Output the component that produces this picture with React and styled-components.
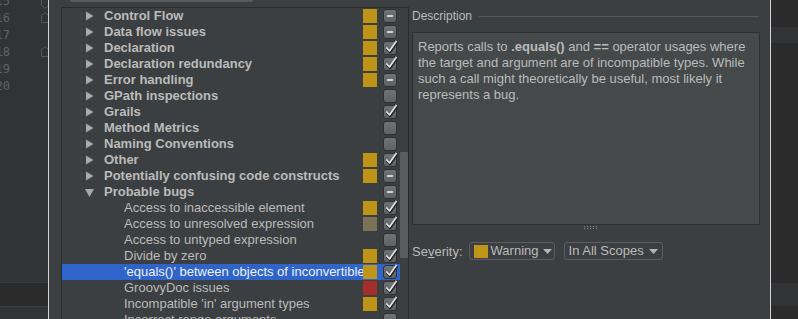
import React from 'react';
import styled, { createGlobalStyle } from 'styled-components';

const Global = createGlobalStyle`
  html, body { margin: 0; padding: 0; background: #2b2b2b; overflow: hidden; }
  body { font-family: "Liberation Sans", Arial, sans-serif; }
  * { box-sizing: border-box; }
`;

const Screen = styled.div`
  display: flex;
  width: 798px;
  height: 319px;
  overflow: hidden;
`;

/* ---------- left editor strip ---------- */
const Editor = styled.div`
  width: 48px;
  flex: none;
  display: flex;
  flex-direction: column;
  background: #313335;
  overflow: hidden;
`;
const EditorTop = styled.div`
  height: 282px;
  flex: none;
  display: flex;
  overflow: hidden;
`;
const NumCol = styled.div`
  width: 10px;
  flex: none;
  margin-top: -7px;
  display: flex;
  flex-direction: column;
`;
const NumLine = styled.div`
  display: flex;
  justify-content: flex-end;
  height: 17px;
  line-height: 17px;
  font-family: "DejaVu Sans Mono", monospace;
  font-size: 12px;
  color: #5f6265;
  white-space: nowrap;
`;
const Gutter = styled.div`
  margin-left: 32px;
  width: 6px;
  flex: none;
  position: relative;
`;
const Fold = styled.svg`
  position: absolute;
  left: -1px;
`;

/* ---------- dialog ---------- */
const Dialog = styled.div`
  width: 723px;
  flex: none;
  background: #3c3f41;
  border-left: 1px solid #d4d4d4;
  border-right: 1px solid #d4d4d4;
  display: flex;
  flex-direction: column;
  overflow: hidden;
`;
const SearchEdge = styled.div`
  flex: none;
  margin-left: 21px;
  width: 183px;
  height: 2px;
  background: #595c5e;
  border-radius: 0 0 3px 3px;
`;
const Body = styled.div`
  flex: none;
  margin-top: 5px;
  display: flex;
  align-items: flex-start;
`;
const TreePane = styled.div`
  margin-left: 12px;
  width: 348px;
  height: 330px;
  border: 1px solid #2b2b2b;
  display: flex;
  flex: none;
`;
const Rows = styled.div`
  width: 338px;
  display: flex;
  flex-direction: column;
`;
const Row = styled.div`
  display: flex;
  align-items: center;
  height: 16px;
  flex: none;
  background: ${p => (p.$sel ? '#2f65ca' : 'transparent')};
  color: ${p => (p.$sel ? '#f0f0f0' : '#bbbbbb')};
`;
const Label = styled.div`
  width: 301px;
  flex: none;
  display: flex;
  align-items: center;
  overflow: hidden;
  white-space: nowrap;
  padding-left: ${p => (p.$child ? 62 : 23)}px;
  font-size: 13px;
  line-height: 16px;
  font-weight: ${p => (p.$child ? 400 : 700)};
`;
const Expander = styled.span`
  width: 19px;
  flex: none;
  display: flex;
  align-items: center;
`;
const Sev = styled.span`
  width: 14px;
  height: 14px;
  flex: none;
  background: ${p => p.$c || 'transparent'};
`;
const CheckBox = styled.span`
  margin-left: 6px;
  width: 14px;
  height: 14px;
  flex: none;
  position: relative;
  border-radius: 3px;
  border: 1px solid #2e3031;
  background: linear-gradient(#707375, #5e6163);
`;
const CheckMark = styled.svg`
  position: absolute;
  left: -1px;
  top: -3px;
`;
const Minus = styled.span`
  position: absolute;
  left: 3px;
  top: 5px;
  width: 6px;
  height: 2px;
  background: #cfcfcf;
`;
const ScrollCol = styled.div`
  width: 8px;
  flex: none;
  padding-top: 144px;
`;
const Thumb = styled.div`
  width: 8px;
  height: 106px;
  background: #5a5d5f;
  border-radius: 1px;
`;

/* ---------- description side ---------- */
const Side = styled.div`
  margin-left: 3px;
  width: 348px;
  flex: none;
  display: flex;
  flex-direction: column;
`;
const TitleRow = styled.div`
  margin-top: 1px;
  height: 16px;
  display: flex;
  align-items: center;
  font-size: 12px;
  color: #bbbbbb;
`;
const TitleLine = styled.div`
  flex: 1;
  height: 1px;
  margin-left: 7px;
  margin-right: 1px;
  background: #55585a;
`;
const DescBox = styled.div`
  margin-top: 8px;
  height: 193px;
  background: #45494a;
  border: 1px solid #2d2f30;
  padding: 6px 0 0 5px;
  font-size: 13px;
  line-height: 16px;
  color: #bbbbbb;
  white-space: nowrap;
`;
const Grip = styled.div`
  margin-top: 1px;
  height: 4px;
  display: flex;
  justify-content: center;
  padding-left: 10px;
`;
const SevRow = styled.div`
  margin-top: 12px;
  height: 18px;
  display: flex;
  align-items: center;
  font-size: 13px;
  color: #bbbbbb;
`;
const Mnemonic = styled.span`
  text-decoration: underline;
`;
const Combo = styled.div`
  margin-left: ${p => p.$ml}px;
  width: ${p => p.$w}px;
  height: 18px;
  border: 1px solid #5b5e60;
  border-radius: 3px;
  display: flex;
  align-items: center;
  padding-left: 4px;
  flex: none;
`;
const ComboSwatch = styled.span`
  width: 14px;
  height: 13px;
  margin-right: 3px;
  background: #be9519;
`;
const ComboText = styled.span`
  line-height: 16px;
`;
const ComboArrow = styled.svg`
  margin-left: ${p => p.$ml}px;
`;

/* ---------- bands of the editor behind ---------- */
const Band = styled.div`
  height: ${p => p.$h}px;
  flex: none;
  background: ${p => p.$c};
  border-top: ${p => (p.$line ? `1px solid ${p.$line}` : 'none')};
`;
const RightStrip = styled.div`
  flex: 1;
  display: flex;
  flex-direction: column;
  background: #2b2b2b;
`;

const GOLD = '#be9519';
const OLIVE = '#7a7358';
const RED = '#a22d29';

const rows = [
  { t: 'Control Flow', s: GOLD, c: 'minus' },
  { t: 'Data flow issues', s: GOLD, c: 'minus' },
  { t: 'Declaration', s: GOLD, c: 'check' },
  { t: 'Declaration redundancy', s: GOLD, c: 'check' },
  { t: 'Error handling', s: GOLD, c: 'minus' },
  { t: 'GPath inspections', c: 'none' },
  { t: 'Grails', c: 'check' },
  { t: 'Method Metrics', c: 'none' },
  { t: 'Naming Conventions', c: 'none' },
  { t: 'Other', s: GOLD, c: 'check' },
  { t: 'Potentially confusing code constructs', s: GOLD, c: 'minus' },
  { t: 'Probable bugs', c: 'minus', open: true },
  { t: 'Access to inaccessible element', s: GOLD, c: 'check', child: true },
  { t: 'Access to unresolved expression', s: OLIVE, c: 'check', child: true },
  { t: 'Access to untyped expression', c: 'none', child: true },
  { t: 'Divide by zero', s: GOLD, c: 'check', child: true },
  { t: "'equals()' between objects of inconvertible types", s: GOLD, c: 'check', child: true, sel: true },
  { t: 'GroovyDoc issues', s: RED, c: 'check', child: true },
  { t: "Incompatible 'in' argument types", s: GOLD, c: 'check', child: true },
  { t: 'Incorrect range arguments', c: 'none', child: true },
];

function Tri({ open }) {
  return open ? (
    <svg width="10" height="9" viewBox="0 0 10 9">
      <polygon points="0,1 9,1 4.5,9" fill="#a9a9a9" />
    </svg>
  ) : (
    <svg width="9" height="10" viewBox="0 0 9 10">
      <polygon points="1,0.5 8.5,5 1,9.5" fill="#a9a9a9" />
    </svg>
  );
}

function Check({ state }) {
  return (
    <CheckBox>
      {state === 'minus' && <Minus />}
      {state === 'check' && (
        <CheckMark width="17" height="16" viewBox="0 0 17 16">
          <polyline points="4,9.5 7,13 14,3" fill="none" stroke="#1e1f20" strokeWidth="2.6" strokeLinejoin="round" />
          <polyline points="3.5,8.5 6.5,12 13.5,2" fill="none" stroke="#ececec" strokeWidth="1.6" strokeLinejoin="round" />
        </CheckMark>
      )}
    </CheckBox>
  );
}

function DownArrow({ ml }) {
  return (
    <ComboArrow $ml={ml} width="9" height="5" viewBox="0 0 9 5">
      <polygon points="0,0 9,0 4.5,5" fill="#b4b4b4" />
    </ComboArrow>
  );
}

export default function App() {
  return (
    <>
      <Global />
      <Screen>
        <Editor>
          <EditorTop>
            <NumCol>
              {['15', '16', '17', '18', '19', '20'].map(n => (
                <NumLine key={n}>{n}</NumLine>
              ))}
            </NumCol>
            <Gutter>
              <Fold style={{ top: 0 }} width="8" height="9" viewBox="0 0 8 9">
                <path d="M0.5,0 V5.5 L4,8.5 L7.5,5.5 V0" fill="none" stroke="#55585a" />
              </Fold>
              <Fold style={{ top: 12 }} width="8" height="11" viewBox="0 0 8 11">
                <path d="M0.5,10.5 V3.5 L4,0.5 L7.5,3.5 V10.5 Z" fill="none" stroke="#55585a" />
              </Fold>
              <Fold style={{ top: 46 }} width="8" height="11" viewBox="0 0 8 11">
                <path d="M0.5,10.5 V3.5 L4,0.5 L7.5,3.5 V10.5 Z" fill="none" stroke="#55585a" />
              </Fold>
            </Gutter>
          </EditorTop>
          <Band $h={24} $c="#2b2b2b" $line="#3a3d3f" />
          <Band $h={13} $c="#313335" $line="#3a3d3f" />
        </Editor>
        <Dialog>
          <SearchEdge />
          <Body>
            <TreePane>
              <Rows>
                {rows.map(r => (
                  <Row key={r.t} $sel={r.sel}>
                    <Label $child={r.child}>
                      {!r.child && (
                        <Expander>
                          <Tri open={r.open} />
                        </Expander>
                      )}
                      {r.t}
                    </Label>
                    <Sev $c={r.s} />
                    <Check state={r.c} />
                  </Row>
                ))}
              </Rows>
              <ScrollCol>
                <Thumb />
              </ScrollCol>
            </TreePane>
            <Side>
              <TitleRow>
                Description
                <TitleLine />
              </TitleRow>
              <DescBox>
                Reports calls to <b>.equals()</b> and <b>==</b> operator usages where
                <br />
                the target and argument are of incompatible types. While
                <br />
                such a call might theoretically be useful, most likely it
                <br />
                represents a bug.
              </DescBox>
              <Grip>
                <svg width="15" height="4" viewBox="0 0 15 4">
                  {[0, 3, 6, 9, 12].map(x => (
                    <g key={x}>
                      <rect x={x} y="0" width="1" height="1" fill="#8d8d8d" />
                      <rect x={x} y="2" width="1" height="1" fill="#8d8d8d" />
                    </g>
                  ))}
                </svg>
              </Grip>
              <SevRow>
                Se<Mnemonic>v</Mnemonic>erity:
                <Combo $ml={6} $w={86}>
                  <ComboSwatch />
                  <ComboText>Warning</ComboText>
                  <DownArrow ml={4} />
                </Combo>
                <Combo $ml={9} $w={99}>
                  <ComboText>In All Scopes</ComboText>
                  <DownArrow ml={5} />
                </Combo>
              </SevRow>
            </Side>
          </Body>
        </Dialog>
        <RightStrip>
          <Band $h={27} $c="#2b2b2b" />
          <Band $h={16} $c="#313335" />
          <Band $h={240} $c="#2b2b2b" />
          <Band $h={23} $c="#313335" />
          <Band $h={13} $c="#2b2b2b" />
        </RightStrip>
      </Screen>
    </>
  );
}
